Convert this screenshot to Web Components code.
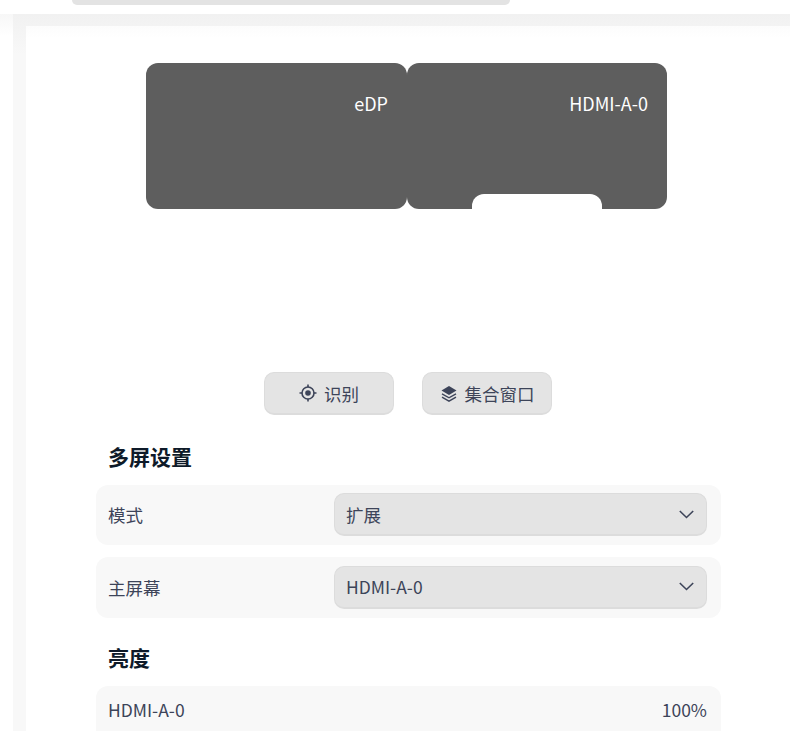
<!DOCTYPE html>
<html lang="zh">
<head>
<meta charset="utf-8">
<title>显示设置</title>
<style>
  html, body {
    margin: 0;
    height: 732px;
    overflow: hidden;
    background: #fff;
    font-family: "Noto Sans CJK SC", "Noto Sans", sans-serif;
    color: #3d4459;
  }
</style>
</head>
<body>
<settings-page>
  <display-arrange></display-arrange>
  <action-bar>
    <action-button icon="locate">识别</action-button>
    <action-button icon="layers">集合窗口</action-button>
  </action-bar>
  <settings-group title="多屏设置">
    <settings-row label="模式"><select-box>扩展</select-box></settings-row>
    <settings-row label="主屏幕"><select-box>HDMI-A-0</select-box></settings-row>
  </settings-group>
  <settings-group title="亮度">
    <settings-row label="HDMI-A-0" tall><span>100%</span></settings-row>
  </settings-group>
</settings-page>

<script>
const icons = {
  locate: `<svg width="18" height="18" viewBox="0 0 18 18" fill="none" stroke="currentColor">
    <circle cx="9" cy="9" r="6" stroke-width="1.6"/>
    <circle cx="9" cy="9" r="2.8" fill="currentColor" stroke="none"/>
    <path d="M9 .5v2.600M9 14.900v2.600M.5 9h2.600M14.900 9h2.600" stroke-width="1.6"/>
  </svg>`,
  layers: `<svg width="18" height="18" viewBox="0 0 18 18">
    <path fill="currentColor" d="M9 2 16.500 6.500 9 11 1.500 6.500z"/>
    <path fill="none" stroke="currentColor" stroke-width="1.400" d="M2 9.800 9 13.800l7-4M2 13.200 9 17.200l7-4"/>
  </svg>`
};

class SettingsPage extends HTMLElement {
  constructor() {
    super();
    this.attachShadow({ mode: 'open' });
    this.shadowRoot.innerHTML = `
    <style>
      :host { display: block; height: 732px; overflow: hidden; }
      #topbar { height: 14px; overflow: hidden; padding-left: 72px; box-sizing: border-box; }
      #search {
        width: 438px;
        height: 5px;
        background: #e3e3e3;
        border-radius: 0 0 10px 10px;
      }
      #shade {
        height: 717px;
        padding-left: 13px;
        box-sizing: border-box;
        background: linear-gradient(#f7f7f7, #fff 22px);
      }
      #outer {
        height: 100%;
        padding: 12px 0 0 13px;
        box-sizing: border-box;
        overflow: hidden;
        background: linear-gradient(#f1f1f1, #f8f8f8 40px);
      }
      #inner {
        height: 100%;
        background: linear-gradient(#fcfcfc, #fff 12px);
        padding-top: 37px;
        box-sizing: border-box;
      }
    </style>
    <div id="topbar"><div id="search"></div></div>
    <div id="shade">
      <div id="outer">
        <div id="inner"><slot></slot></div>
      </div>
    </div>`;
  }
}

class DisplayArrange extends HTMLElement {
  constructor() {
    super();
    this.attachShadow({ mode: 'open' });
    this.shadowRoot.innerHTML = `
    <style>
      :host { display: block; position: relative; height: 309px; }
      .monitor {
        position: absolute;
        top: 0;
        height: 146px;
        background: #5e5e5e;
        border-radius: 12px;
        color: #fff;
        font-size: 18px;
        line-height: 24px;
        text-align: right;
        padding: 28px 19px 0 0;
        box-sizing: border-box;
      }
      #edp { left: 120px; width: 261px; }
      #hdmi { left: 381px; width: 260px; }
      #notch {
        position: absolute;
        left: 65px;
        bottom: 0;
        width: 130px;
        height: 15px;
        background: #fff;
        border-radius: 12px 12px 0 0;
      }
    </style>
    <div class="monitor" id="edp">eDP</div>
    <div class="monitor" id="hdmi">HDMI-A-0<div id="notch"></div></div>`;
  }
}

class ActionBar extends HTMLElement {
  constructor() {
    super();
    this.attachShadow({ mode: 'open' });
    this.shadowRoot.innerHTML = `
    <style>
      :host { display: flex; justify-content: center; gap: 28px; margin-bottom: 28.800px; }
    </style>
    <slot></slot>`;
  }
}

class ActionButton extends HTMLElement {
  constructor() {
    super();
    this.attachShadow({ mode: 'open' });
    this.shadowRoot.innerHTML = `
    <style>
      :host {
        display: flex;
        align-items: center;
        justify-content: center;
        gap: 7px;
        width: 130px;
        height: 43px;
        box-sizing: border-box;
        background: #e4e4e4;
        border: 1px solid #dcdcdc;
        border-bottom-width: 2px;
        border-radius: 10px;
        font-size: 17.500px;
        color: #3d4459;
      }
      span { display: flex; }
    </style>
    <span>${icons[this.getAttribute('icon')]}</span><slot></slot>`;
  }
}

class SettingsGroup extends HTMLElement {
  constructor() {
    super();
    this.attachShadow({ mode: 'open' });
    this.shadowRoot.innerHTML = `
    <style>
      :host { display: block; margin: 0 0 27.400px 70px; width: 625px; }
      h2 {
        margin: 0;
        padding-left: 12px;
        font-size: 21px;
        line-height: 24px;
        font-weight: 700;
        color: #0e1a29;
      }
      #rows { display: flex; flex-direction: column; gap: 12px; margin-top: 17px; }
    </style>
    <h2>${this.getAttribute('title')}</h2>
    <div id="rows"><slot></slot></div>`;
  }
}

class SettingsRow extends HTMLElement {
  constructor() {
    super();
    this.attachShadow({ mode: 'open' });
    this.shadowRoot.innerHTML = `
    <style>
      :host {
        display: flex;
        align-items: center;
        justify-content: space-between;
        height: 60.400px;
        box-sizing: border-box;
        padding: 0 14px 0 12px;
        background: #f8f8f8;
        border-radius: 12px;
        font-size: 17.500px;
      }
      :host([tall]) { height: 90px; align-items: flex-start; padding-top: 11px; }
    </style>
    <span>${this.getAttribute('label')}</span><slot></slot>`;
  }
}

class SelectBox extends HTMLElement {
  constructor() {
    super();
    this.attachShadow({ mode: 'open' });
    this.shadowRoot.innerHTML = `
    <style>
      :host {
        display: flex;
        align-items: center;
        justify-content: space-between;
        width: 373px;
        height: 43px;
        box-sizing: border-box;
        padding: 0 12px 0 11px;
        background: #e4e4e4;
        border: 1px solid #dcdcdc;
        border-bottom-width: 2px;
        border-radius: 10px;
      }
      svg { display: block; }
    </style>
    <slot></slot>
    <svg width="15" height="9" viewBox="0 0 15 9" fill="none" stroke="#3d4459" stroke-width="1.600">
      <path d="M.8 1 7.500 7.500 14.200 1"/>
    </svg>`;
  }
}

customElements.define('settings-page', SettingsPage);
customElements.define('display-arrange', DisplayArrange);
customElements.define('action-bar', ActionBar);
customElements.define('action-button', ActionButton);
customElements.define('settings-group', SettingsGroup);
customElements.define('settings-row', SettingsRow);
customElements.define('select-box', SelectBox);
</script>
</body>
</html>
